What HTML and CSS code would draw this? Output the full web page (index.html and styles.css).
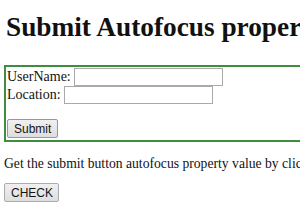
FILE: index.html
```html
<!DOCTYPE html>
<html lang="en">
<head>
    <meta charset="UTF-8">
    <meta name="viewport" content="width=device-width, initial-scale=1.0">
    <title>Submit autofocus</title>
    <link rel="stylesheet" href="styles.css">
</head>
<body class="page">
    <h1 class="title">Submit Autofocus property</h1>

    <form class="demo-form" id="FORM1">
        <div class="row">
            <label for="USR">UserName:</label>
            <input type="text" id="USR" class="field">
        </div>
        <div class="row">
            <label for="LOC">Location:</label>
            <input type="text" id="LOC" class="field">
        </div>
        <div class="btn-row">
            <input type="submit" id="SUBMIT1" class="btn btn-focus" value="Submit" autofocus>
        </div>
    </form>

    <p class="info">Get the submit button autofocus property value by clicking the below button</p>

    <div class="check-row">
        <button type="button" class="btn" onclick="checkFocus()">CHECK</button>
    </div>
    <p class="sample"></p>

    <script>
        function checkFocus() {
            var s = document.getElementById("SUBMIT1").autofocus;
            document.querySelector(".sample").innerHTML = "The submit button autofocus property is set to: " + s;
        }
    </script>
</body>
</html>
```

FILE: styles.css
```css
html {
    overflow: hidden;
}

.page {
    margin: 0 0 0 4px;
    background-color: white;
    color: rgb(17, 17, 17);
    font-family: "Liberation Serif", "Times New Roman", serif;
    font-size: 14px;
    white-space: nowrap;
}

.title {
    font-size: 27.3px;
    font-weight: bold;
    line-height: 30px;
    margin: 12px 0 23px;
    padding-left: 2px;
}

.demo-form {
    width: 320px;
    border: 2px solid rgb(64, 140, 64);
    padding: 1px 1px 1px;
}

.row {
    display: flex;
    align-items: center;
    gap: 3px;
    height: 18px;
}

.field {
    box-sizing: border-box;
    width: 149px;
    height: 18px;
    margin: 0;
    padding: 1px 2px;
    border: 1px solid rgb(170, 170, 170);
    background-color: white;
    font-size: 11.5px;
}

.btn-row {
    margin-top: 15px;
    height: 20px;
}

.btn {
    box-sizing: border-box;
    height: 19px;
    margin: 0;
    padding: 0 6px;
    border: 1px solid rgb(172, 172, 172);
    border-radius: 2px;
    background: linear-gradient(rgb(240, 240, 240), rgb(222, 222, 222));
    color: rgb(20, 20, 20);
    font-family: "Liberation Sans", Arial, sans-serif;
    font-size: 12px;
}

.btn:focus {
    outline: none;
}

.btn-focus {
    width: 51px;
    border-color: rgb(122, 158, 204);
}

.info {
    margin: 14px 0 11px;
    font-size: 13.65px;
    line-height: 16px;
}

.check-row {
    height: 19px;
}

.check-row .btn {
    width: 55px;
}
```
